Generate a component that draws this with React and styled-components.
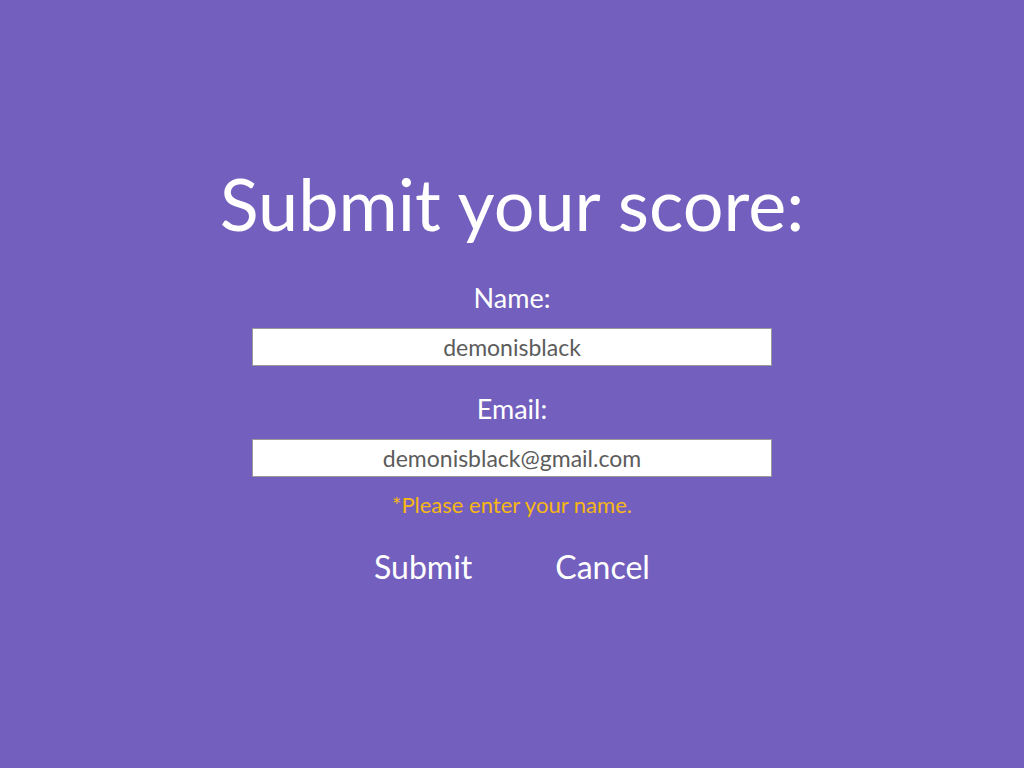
import React, {useState} from 'react';
import styled, {createGlobalStyle} from 'styled-components';

const GlobalStyle = createGlobalStyle`
    html, body {
        margin: 0;
        padding: 0;
        background: #735fbd;
    }
`;

const Page = styled.div`
    width: 1024px;
    height: 768px;
    background: #735fbd;
    display: flex;
    flex-direction: column;
    align-items: center;
    font-family: Lato, "Open Sans", sans-serif;
    color: #fff;
`;

const Title = styled.h1`
    margin: 155px 0 0;
    font-size: 72px;
    font-weight: 400;
    line-height: 96px;
`;

const Form = styled.form`
    display: flex;
    flex-direction: column;
    align-items: center;
    margin-top: 30px;
`;

const Label = styled.label`
    font-size: 27px;
    line-height: 34px;
    margin-top: ${props => props.$top || 0}px;
    margin-bottom: 13px;
`;

const Input = styled.input`
    box-sizing: border-box;
    width: 520px;
    height: 38px;
    border: 1px solid #9a9a9a;
    background: #fff;
    text-align: center;
    font-family: inherit;
    font-size: 23px;
    color: #5c5c5c;
    outline: none;
`;

const ErrorText = styled.div`
    color: #f6b715;
    font-size: 22px;
    line-height: 28px;
    margin-top: 14px;
`;

const Actions = styled.div`
    display: flex;
    gap: 83px;
    margin-top: 26px;
`;

const TextButton = styled.button`
    background: none;
    border: none;
    padding: 0;
    color: #fff;
    font-family: inherit;
    font-size: 32px;
    line-height: 44px;
    cursor: pointer;
`;

export default function App() {
    const [name, setName] = useState('demonisblack');
    const [email, setEmail] = useState('demonisblack@gmail.com');

    return (
        <>
            <GlobalStyle/>
            <Page>
                <Title>Submit your score:</Title>
                <Form onSubmit={e => e.preventDefault()}>
                    <Label>Name:</Label>
                    <Input value={name} onChange={e => setName(e.target.value)}/>
                    <Label $top={26}>Email:</Label>
                    <Input value={email} onChange={e => setEmail(e.target.value)}/>
                    <ErrorText>*Please enter your name.</ErrorText>
                    <Actions>
                        <TextButton type="submit">Submit</TextButton>
                        <TextButton type="button">Cancel</TextButton>
                    </Actions>
                </Form>
            </Page>
        </>
    );
}
